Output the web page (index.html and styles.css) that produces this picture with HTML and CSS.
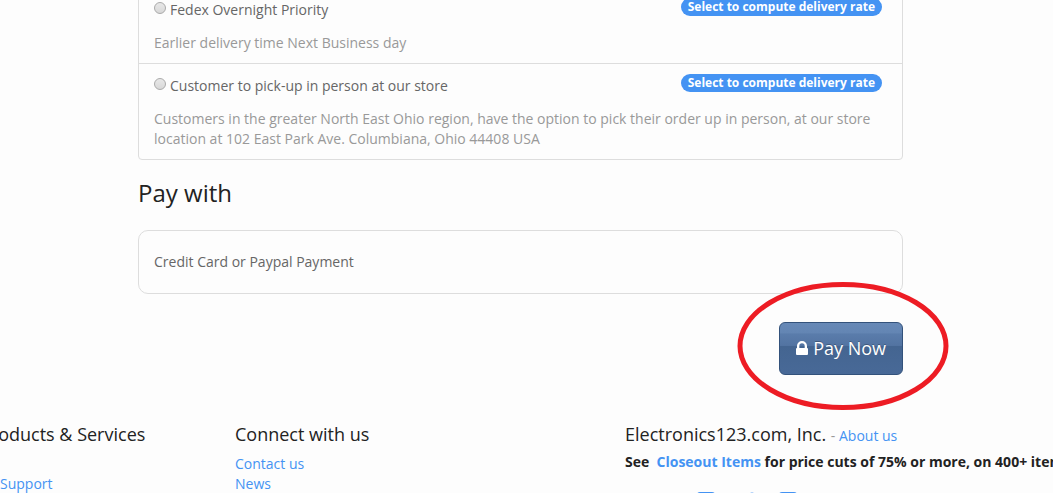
FILE: index.html
```
<!DOCTYPE html>
<html lang="en">
<head>
	<meta charset="utf-8">
	<title>Checkout</title>
	<link rel="stylesheet" href="styles.css">
</head>
<body>
	<form class="checkout">
		<ul class="methods">
			<li>
				<div class="method">
					<label><input type="radio" name="shipping">Fedex Overnight Priority</label>
					<span class="badge">Select to compute delivery rate</span>
				</div>
				<p>Earlier delivery time Next Business day</p>
			</li>
			<li>
				<div class="method">
					<label><input type="radio" name="shipping">Customer to pick-up in person at our store</label>
					<span class="badge">Select to compute delivery rate</span>
				</div>
				<p>Customers in the greater North East Ohio region, have the option to pick their order up in person, at our store location at 102 East Park Ave. Columbiana, Ohio 44408 USA</p>
			</li>
		</ul>

		<h3>Pay with</h3>
		<div class="payment">Credit Card or Paypal Payment</div>

		<div class="actions">
			<button type="button" class="pay">
				<svg class="lock" viewBox="0 0 12 14" width="12" height="14"><path fill="#fff" fill-rule="evenodd" d="M1 7V5a5 5 0 0 1 10 0v2q1 0 1 1v5q0 1-1 1H1q-1 0-1-1V8q0-1 1-1zM3.3 7h5.4V5a2.7 2.7 0 0 0-5.4 0z"/></svg>
				Pay Now
			</button>
			<svg class="ring" viewBox="0 0 212 130" width="212" height="130"><ellipse cx="106" cy="65" rx="103" ry="61.5" fill="none" stroke="#ed1c24" stroke-width="5"/></svg>
		</div>
	</form>

	<footer class="footer">
		<div class="products">
			<h4>Products &amp; Services</h4>
			<ul>
				<li></li>
				<li><a href="#">Support</a></li>
			</ul>
		</div>
		<div>
			<h4>Connect with us</h4>
			<ul>
				<li><a href="#">Contact us</a></li>
				<li><a href="#">News</a></li>
			</ul>
		</div>
		<div class="company">
			<h4>Electronics123.com, Inc. <small>- <a href="#">About us</a></small></h4>
			<p class="closeout">See&nbsp; <a href="#">Closeout Items</a> for price cuts of 75% or more, on 400+ items</p>
			<div class="social">
				<a href="#" aria-label="Facebook"><svg viewBox="0 0 20 20" width="20" height="20"><path fill="#4493f3" d="M4 0h12a3 3 0 0 1 3 3v14a3 3 0 0 1-3 3h-2v-7h2v-3h-2V8q0-2 2-2V3q-5 0-5 5v2H9v3h2v7H4a3 3 0 0 1-3-3V3a3 3 0 0 1 3-3z"/></svg></a>
				<a href="#" aria-label="Twitter"><svg viewBox="0 0 20 20" width="20" height="20"><path fill="#4493f3" d="M1 17q4 0 5-2-3 0-4-3h2q-3-1-3-4l2 1Q0 6 2 3q3 4 8 4 0-4 3-6l2-.6 2 .6 2 1-2 2 2-1-2 3q0 12-11 13-3 0-6-2z"/></svg></a>
				<a href="#" aria-label="Google Plus"><svg viewBox="0 0 20 20" width="20" height="20"><path fill="#4493f3" fill-rule="evenodd" d="M4 0h12a3 3 0 0 1 3 3v14a3 3 0 0 1-3 3H4a3 3 0 0 1-3-3V3a3 3 0 0 1 3-3zM8 9v2h3q-1 2-3 2a3 3 0 1 1 2-5l2-2a5 5 0 1 0 1 3z"/></svg></a>
			</div>
		</div>
	</footer>
</body>
</html>
```

FILE: styles.css
```
body {
	margin: 0;
	background-color: #fdfdfd;
	color: #666;
	font: 14px/20px "Open Sans", sans-serif;
	overflow: hidden;
}

a {
	color: #4493f3;
	text-decoration: none;
}

ul, p, h3, h4 {
	margin: 0;
	padding: 0;
	list-style: none;
}

h3, h4 {
	color: #222;
	font-weight: 400;
}

h3 {
	margin: 13px 0 17px;
	font-size: 24px;
	line-height: 40px;
}

h4 {
	font-size: 18px;
	line-height: 20px;
}

h4 small {
	color: #999;
	font-size: 14px;
}

.checkout {
	margin: 0 150px 0 138px;
}

/* shipping methods */
.methods {
	margin-top: -13px;
	border: 1px solid #ddd;
	border-radius: 4px;
}

.methods li {
	padding: 12px 20px 10px 15px;
}

.methods li + li {
	border-top: 1px solid #ddd;
}

.methods p {
	color: #999;
}

.method {
	display: flex;
	justify-content: space-between;
	align-items: flex-start;
	margin-bottom: 13px;
}

.method label {
	display: flex;
	gap: 4px;
}

.method input {
	appearance: none;
	width: 12px;
	height: 12px;
	margin: 2px 0 0;
	border: 1px solid #aaa;
	border-radius: 50%;
	background: linear-gradient(#e8e8e8, #d8d8d8);
}

.badge {
	margin-top: -2px;
	padding: 0 7px;
	border-radius: 9px;
	background-color: #4493f3;
	color: #fff;
	font-size: 12px;
	font-weight: 700;
	line-height: 18px;
}

/* payment */
.payment {
	padding: 21px 15px;
	border: 1px solid #ddd;
	border-radius: 10px;
}

.actions {
	position: relative;
	display: flex;
	justify-content: flex-end;
	margin-top: 28px;
}

.pay {
	padding: 11px 16px;
	border: 1px solid #33527b;
	border-radius: 6px;
	background: linear-gradient(#6789b7 0, #6385b3 20%, #5a7cab 21%, #5374a2 44%, #446591 46%, #486997 100%);
	color: #fff;
	font: 18px/29px "Open Sans", sans-serif;
	text-shadow: 0 -1px 0 rgba(0, 0, 0, 0.25);
}

.ring {
	position: absolute;
	top: -41px;
	right: -46px;
	pointer-events: none;
}

/* footer */
.footer {
	display: grid;
	grid-template-columns: 255px 390px 1fr;
	margin: 49px 0 0 -20px;
}

.footer ul {
	margin-top: 10px;
}

.footer li {
	height: 20px;
}

.products ul {
	padding-left: 20px;
}

.closeout {
	margin-top: 6px;
	color: #222;
	font-weight: 700;
	white-space: nowrap;
}

.social {
	display: flex;
	gap: 21px;
	margin: 20px 0 0 71px;
}
```
